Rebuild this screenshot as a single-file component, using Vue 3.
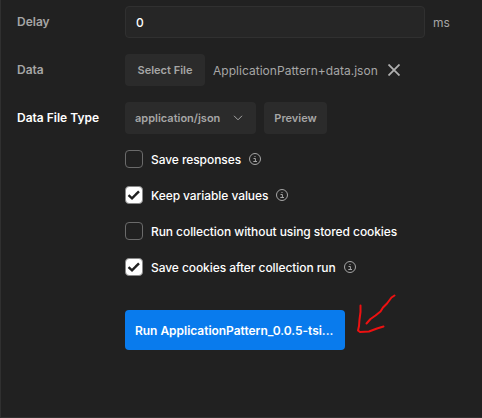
<script setup>
import { ref } from 'vue'

const delay = ref('0')
const options = ref([
  { label: 'Save responses', checked: false, info: true, id: 'responses' },
  { label: 'Keep variable values', checked: true, info: true, id: 'variables' },
  { label: 'Run collection without using stored cookies', checked: false, info: false, id: 'stored' },
  { label: 'Save cookies after collection run', checked: true, info: true, id: 'cookies' },
])
</script>

<template>
  <main class="runner">
    <div class="row">
      <span class="label">Delay</span>
      <input v-model="delay" class="delay" type="text" />
      <span class="unit">ms</span>
    </div>
    <div class="row">
      <span class="label">Data</span>
      <button class="btn select">Select File</button>
      <span class="filename">ApplicationPattern+data.json</span>
      <svg class="close" width="12" height="12" viewBox="0 0 12 12">
        <path d="M.5 .5L11.5 11.5M11.5 .5L.5 11.5" />
      </svg>
    </div>
    <div class="row">
      <span class="label strong">Data File Type</span>
      <button class="btn type">
        <span>application/json</span>
        <svg class="chevron" width="10" height="6" viewBox="0 0 10 6">
          <path d="M1 .8L5 4.8L9 .8" />
        </svg>
      </button>
      <button class="btn preview">Preview</button>
    </div>
    <div class="options">
      <div v-for="o in options" :key="o.id" class="option" @click="o.checked = !o.checked">
        <span class="box" :class="{ on: o.checked }">
          <svg v-if="o.checked" width="18" height="18" viewBox="0 0 18 18">
            <path d="M3.5 9.2L7 12.300L14 5.300" />
          </svg>
        </span>
        <span class="text">{{ o.label }}</span>
        <svg v-if="o.info" class="info" width="12" height="12" viewBox="0 0 12 12">
          <circle cx="6" cy="6" r="5.5" />
          <path d="M4.5 5.5H6.4V8.5M4.3 8.5H8M5.5 3.5H6.5" />
        </svg>
      </div>
    </div>
    <button class="run"><span>Run ApplicationPattern_0.0.5-tsi...</span></button>
    <svg class="arrow" width="44" height="46" viewBox="0 0 44 46">
      <path d="M39.500 5.500L36.500 7.500L32 13.500L28 17.500L25.500 21.500L20.500 25.500L15.500 29L11.500 33.500M5.500 15.500L5.500 22L4.500 29.500L4 36L3 40.500L5 42L14 41.500L22 38.500L28.500 36.500" />
    </svg>
  </main>
</template>

<style>
body {
  margin: 0;
  background: #212121;
}
</style>

<style scoped>
.runner {
  position: relative;
  box-sizing: border-box;
  width: 482px;
  height: 418px;
  padding: 6px 0 0 16px;
  border-left: 1px solid #303030;
  border-bottom: 1px solid #303030;
  background: #212121;
  font-family: Inter, sans-serif;
  font-size: 12px;
  line-height: 16px;
  color: #fff;
  overflow: hidden;
}
.row {
  display: flex;
  align-items: center;
  height: 32px;
  margin-bottom: 16px;
  white-space: nowrap;
}
.label {
  width: 108px;
  flex: none;
  font-weight: 600;
  color: #a6a6a6;
}
.label.strong {
  color: #fff;
}
.delay {
  box-sizing: border-box;
  width: 300px;
  height: 32px;
  padding: 1px 10px 0;
  border: 1px solid #303030;
  border-radius: 4px;
  outline: none;
  background: #262626;
  font: 500 12px Inter, sans-serif;
  color: #fff;
}
.unit {
  margin-left: 8px;
  padding-top: 2px;
  color: #a6a6a6;
}
.btn {
  box-sizing: border-box;
  flex: none;
  height: 32px;
  padding: 0;
  border: 0;
  border-radius: 4px;
  background: #2b2b2b;
  font: 600 11px Inter, sans-serif;
  color: #a6a6a6;
}
.select {
  width: 80px;
}
.filename {
  width: 167px;
  margin-left: 8px;
  padding-top: 2px;
  letter-spacing: 0.03px;
  color: #a6a6a6;
}
.close {
  margin-left: 8px;
  fill: none;
  stroke: #b0b0b0;
  stroke-width: 1.8;
}
.type {
  display: flex;
  align-items: center;
  justify-content: space-between;
  width: 131px;
  padding: 0 13px 0 10px;
}
.chevron {
  fill: none;
  stroke: #a6a6a6;
  stroke-width: 1;
}
.preview {
  width: 63px;
  margin-left: 8px;
}
.options {
  display: flex;
  flex-direction: column;
  gap: 18px;
  margin-left: 108px;
}
.option {
  display: flex;
  align-items: center;
  height: 18px;
  white-space: nowrap;
  font-weight: 500;
}
.text {
  padding-top: 2px;
  letter-spacing: -0.075px;
}
.box {
  box-sizing: border-box;
  width: 18px;
  height: 18px;
  margin-right: 8px;
  border: 1px solid #6b6b6b;
  border-radius: 4px;
}
.box.on {
  border-color: #8a8a8a;
  background: #fff;
}
.box svg {
  display: block;
  margin: -1px;
  fill: none;
  stroke: #212121;
  stroke-width: 2.4;
}
.info {
  margin-left: 8px;
  fill: none;
  stroke: #a6a6a6;
  stroke-width: 1;
}
.run {
  display: block;
  width: 220px;
  height: 40px;
  margin: 34px 0 0 108px;
  padding: 0 10px;
  border: 0;
  border-radius: 4px;
  background: #097bed;
  font: 600 12px Inter, sans-serif;
  letter-spacing: -0.03px;
  color: #fff;
  text-align: left;
  white-space: nowrap;
}
.arrow {
  position: absolute;
  left: 354px;
  top: 290px;
  fill: none;
  stroke: #ed1111;
  stroke-width: 2;
  stroke-linecap: round;
  stroke-linejoin: round;
}
</style>
